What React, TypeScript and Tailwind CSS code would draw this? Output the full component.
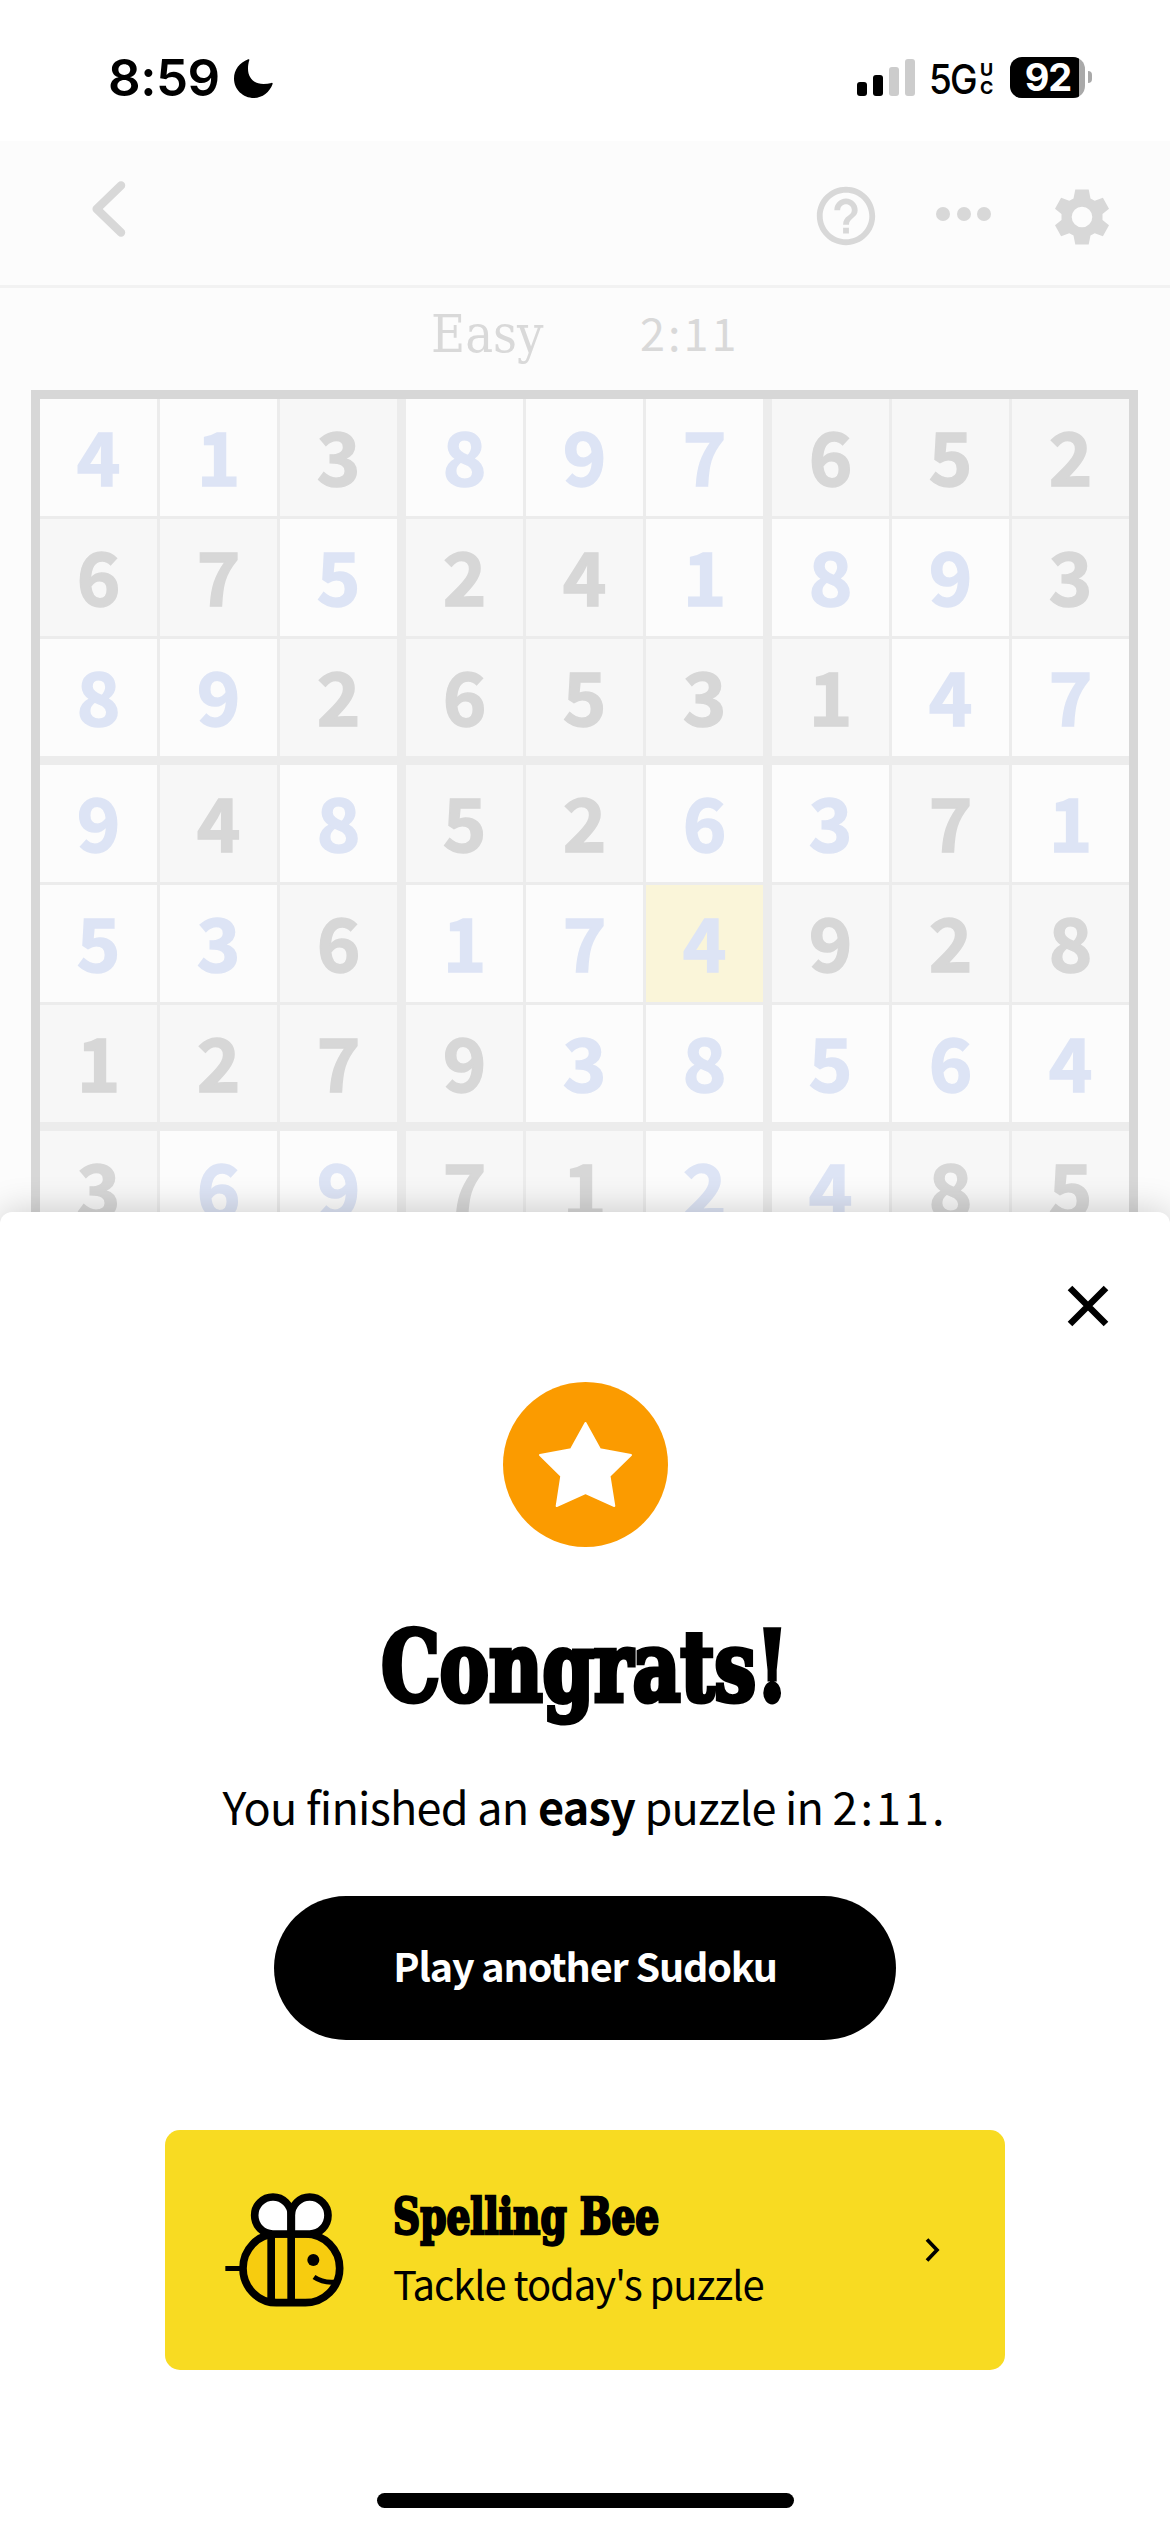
import { MdHelpOutline } from "react-icons/md"

interface Cell {
  value: string
  given: boolean
  selected: boolean
}

// "x" marks a prefilled cell, "." one entered by the player, "*" the selected one
const VALUES = ["413897652", "675241893", "892653147", "948526371", "536174928", "127938564", "369712485"]
const MARKS = ["..x...xxx", "xx.xx...x", "..xxxxx..", ".x.xx..x.", "..x..*xxx", "xxxx.....", "x..xx..xx"]

const rows: Cell[][] = VALUES.map((row, r) =>
  row.split("").map((value, c) => ({
    value,
    given: MARKS[r][c] === "x",
    selected: MARKS[r][c] === "*",
  })),
)

const blocks = [rows.slice(0, 3), rows.slice(3, 6), rows.slice(6)]

function StatusBar() {
  return (
    <div className="h-[141px] bg-white flex items-start justify-between pl-[108px] pr-[78px] font-['Inter']">
      <div className="flex items-center h-[42px] mt-[57px]">
        <span className="w-[126px] text-[51px] leading-[42px] font-semibold tracking-[-0.5px]">8:59</span>
        <svg className="w-[39px] h-[39px]" viewBox="0 0 39 39">
          <path
            d="M14.2.3c.8-.4 1.4.1 1.1.9C14.500 3.500 14 6.500 14 9.500 14 19 20 25 29.500 25c2.700 0 5.500-.4 8-1.100.9-.2 1.400.4 1.100 1.200C35.700 33.200 28.500 39 20 39 9 39 0 30.500 0 19.500 0 11 5.500 3.500 14.200.3z"
            fill="black"
          />
        </svg>
      </div>
      <div className="flex items-center h-[42px] mt-[56px]">
        <div className="flex items-end gap-[6px] h-[37px]">
          <div className="w-[10px] h-[14px] rounded-[3px] bg-black" />
          <div className="w-[10px] h-[21px] rounded-[3px] bg-black" />
          <div className="w-[10px] h-[29px] rounded-[3px] bg-[#cccccc]" />
          <div className="w-[10px] h-[37px] rounded-[3px] bg-[#cccccc]" />
        </div>
        <span className="ml-[14px] w-[51px] mt-[4px] origin-left scale-x-[0.9] text-[41px] leading-[42px] font-medium tracking-[-2px]">
          5G
        </span>
        <div className="w-[17px] mr-[13px] mt-[3px] flex flex-col text-[18px] leading-[18px] font-bold">
          <span>U</span>
          <span>C</span>
        </div>
        <div className="relative w-[75px] h-[41px] mt-px">
          <div className="h-full rounded-[12px] overflow-hidden bg-[#a9a9a9]">
            <div className="w-[69px] h-full bg-black" />
          </div>
          <span className="absolute inset-0 pl-[1px] text-center text-white text-[38px] leading-[41px] font-bold tracking-[-1px]">
            92
          </span>
        </div>
        <div className="ml-[3px] w-[4px] h-[12px] rounded-r-full bg-[#a9a9a9]" />
      </div>
    </div>
  )
}

function Toolbar() {
  return (
    <div className="h-[147px] border-b-3 border-[#f2f2f2] flex items-start text-[#d8d8d8]">
      <svg className="ml-[91px] mt-[39px] w-[36px] h-[58px]" viewBox="0 0 36 58" fill="none">
        <path d="M30 5.500 5.700 29 30 52.500" stroke="currentColor" strokeWidth="8.5" strokeLinecap="round" strokeLinejoin="round" />
      </svg>
      <MdHelpOutline className="ml-[684px] mt-[40px] w-[70px] h-[70px]" />
      <div className="ml-[55px] mt-[66px] flex gap-[6.500px]">
        <div className="size-[14px] rounded-full bg-[#d8d8d8]" />
        <div className="size-[14px] rounded-full bg-[#d8d8d8]" />
        <div className="size-[14px] rounded-full bg-[#d8d8d8]" />
      </div>
      <svg className="ml-[63px] mt-[48px] w-[56px] h-[56px]" viewBox="-28 -28 56 56">
        <path
          fill="currentColor"
          fillRule="evenodd"
          d="M-6.700-27.500H6.700L8.500-18.500 12.700-16.300 20.900-19.300 27-8.300 20.500-3V3L27 8.300 20.900 19.300 12.700 16.300 8.500 18.500 6.700 27.500H-6.700L-8.500 18.500-12.700 16.300-20.900 19.300-27 8.300-20.500 3V-3L-27-8.300-20.900-19.300-12.700-16.300-8.500-18.500ZM0-10.300A10.300 10.300 0 1 0 0 10.300 10.300 10.300 0 1 0 0-10.300Z"
        />
      </svg>
    </div>
  )
}

function BoardCell({ value, given, selected }: Cell) {
  const background = selected ? "bg-[#faf5d9]" : given ? "bg-[#f7f7f7]" : "bg-[#fcfcfc]"
  const color = given ? "text-[#d7d7d7]" : "text-[#dde4f5]"
  return <div className={`w-[117px] h-[117px] text-center ${background} ${color}`}>{value}</div>
}

function Board() {
  return (
    <div className="mx-[31px] w-[1107px] border-9 border-[#d7d7d7] bg-[#ececec] flex flex-col gap-[9px] font-['Noto_Sans_CJK_JP',sans-serif] text-[74px] leading-[109px] font-bold [-webkit-text-stroke:1.5px]">
      {blocks.map((block, b) => (
        <div key={b} className="flex flex-col gap-[3px]">
          {block.map((row, r) => (
            <div key={r} className="flex gap-[9px]">
              {[0, 3, 6].map((start) => (
                <div key={start} className="flex gap-[3px]">
                  {row.slice(start, start + 3).map((cell, c) => (
                    <BoardCell key={c} {...cell} />
                  ))}
                </div>
              ))}
            </div>
          ))}
        </div>
      ))}
    </div>
  )
}

function BeeIcon() {
  return (
    <svg className="w-[124px] h-[120px] shrink-0" viewBox="219 240 372 360" fill="none" stroke="black" strokeWidth="23">
      <path d="M226 475.500H272" strokeWidth="15" />
      <path d="M379 372H466a103 103 0 0 1 0 206H379a100 103 0 0 1 0-206z" fill="#f7cc0f" />
      <path d="M424 372V316a55 55 0 0 0-110 0c0 31 24 56 55 56z" fill="white" />
      <path d="M424 372V316a55 55 0 0 1 110 0c0 31-24 56-55 56z" fill="white" />
      <path d="M363.500 372V578M423.500 300V578" />
      <circle cx="490" cy="450" r="18" fill="black" stroke="none" />
      <path d="M492 501Q520 520 556 516" strokeWidth="15" />
    </svg>
  )
}

function CongratsSheet() {
  return (
    <div className="absolute inset-x-0 bottom-0 h-[1320px] rounded-t-[12px] bg-white shadow-[0_0_36px_rgba(0,0,0,0.2)] flex flex-col items-center font-['Noto_Sans_CJK_JP',sans-serif] text-black">
      <svg className="self-end mr-[61px] mt-[73px] w-[42px] h-[42px]" viewBox="0 0 42 42">
        <path d="M3 3 39 39M39 3 3 39" stroke="black" strokeWidth="6.500" />
      </svg>
      <svg className="mt-[55px] w-[165px] h-[165px]" viewBox="0 0 165 165">
        <circle cx="82.500" cy="82.500" r="82.500" fill="#fb9b00" />
        <path
          d="M82.500 41 97 67.300 128 73 106.500 94 111.300 124 82.500 111 53.700 124 58.300 94 37 73 68 67.300z"
          fill="white"
          stroke="white"
          strokeWidth="2"
          strokeLinejoin="round"
        />
      </svg>
      <h1 className="mt-[57px] h-[125px] text-[98px] leading-[125px] font-bold font-['DejaVu_Serif_Condensed','DejaVu_Serif',serif] scale-x-[0.835] [-webkit-text-stroke:5px_black] whitespace-nowrap">
        Congrats!
      </h1>
      <p className="mt-[47px] text-[45px] leading-[60px] tracking-[-0.75px] whitespace-nowrap">
        You finished an <b>easy</b> puzzle in <span className="tracking-[3px]">2:11.</span>
      </p>
      <button className="mt-[60px] w-[622px] h-[144px] pb-[7px] rounded-full bg-black text-white text-[39.500px] leading-[60px] font-bold tracking-[-1.150px]">
        Play another Sudoku
      </button>
      <div className="mt-[90px] w-[840px] h-[240px] rounded-[15px] bg-[#f8db22] flex items-center pl-[58px] pr-[65px]">
        <BeeIcon />
        <div className="ml-[46px] flex-1 flex flex-col">
          <h2 className="origin-left scale-x-[0.835] text-[50px] leading-[66px] font-bold font-['DejaVu_Serif_Condensed','DejaVu_Serif',serif] [-webkit-text-stroke:2.5px_black] whitespace-nowrap">
            Spelling Bee
          </h2>
          <p className="text-[40px] leading-[66px] tracking-[-1.100px] whitespace-nowrap">Tackle today's puzzle</p>
        </div>
        <svg className="w-[15px] h-[24px]" viewBox="0 0 15 24" fill="none">
          <path d="M2 1.500 12 12 2 22.500" stroke="black" strokeWidth="3.700" />
        </svg>
      </div>
      <div className="mt-[123px] w-[417px] h-[15px] rounded-full bg-black" />
    </div>
  )
}

export default function App() {
  return (
    <div className="relative w-[1170px] h-[2532px] overflow-hidden bg-[#fcfcfc]">
      <StatusBar />
      <Toolbar />
      <div className="h-[102px] flex pl-[431px] text-[#d9d9d9] whitespace-nowrap">
        <span className="w-[209px] mt-[13px] text-[52px] leading-[66px] font-['DejaVu_Serif_Condensed','DejaVu_Serif',serif]">
          Easy
        </span>
        <span className="mt-[11px] text-[45px] leading-[66px] tracking-[3px] font-['Noto_Sans_CJK_JP',sans-serif]">2:11</span>
      </div>
      <Board />
      <CongratsSheet />
    </div>
  )
}
